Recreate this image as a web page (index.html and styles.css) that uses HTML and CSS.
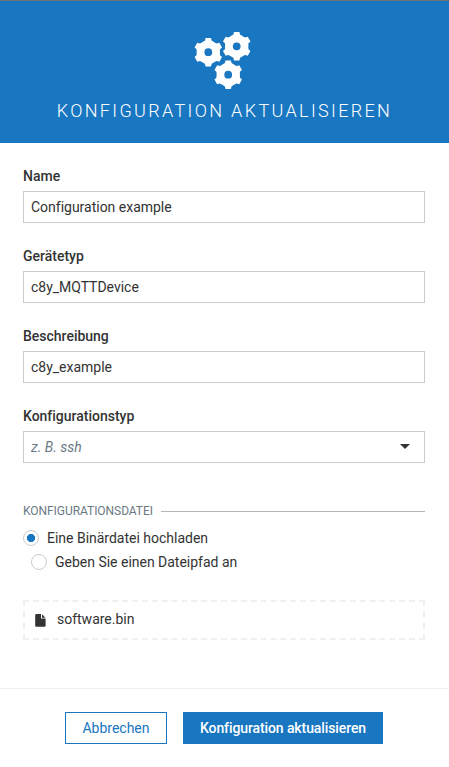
FILE: index.html
```html
<!DOCTYPE html>
<html lang="de">
<head>
<meta charset="utf-8">
<title>Konfiguration aktualisieren</title>
<link rel="stylesheet" href="styles.css">
</head>
<body>
<form class="modal">
  <header class="modal-header">
    <svg class="gears" width="60" height="60" viewBox="0 0 60 60" aria-hidden="true">
      <defs>
        <g id="gear">
          <circle r="7.8" fill="none" stroke="#fff" stroke-width="7.8"/>
          <g id="teeth" fill="#fff">
            <path id="tooth" d="M-2.7-14.3h5.4l.6 2.6 2.2 2.2h-11l2.2-2.2z"/>
            <use href="#tooth" transform="rotate(60)"/>
            <use href="#tooth" transform="rotate(120)"/>
            <use href="#tooth" transform="rotate(180)"/>
            <use href="#tooth" transform="rotate(240)"/>
            <use href="#tooth" transform="rotate(300)"/>
          </g>
        </g>
      </defs>
      <use href="#gear" x="14.3" y="22.2"/>
      <use href="#gear" x="42.7" y="16.3"/>
      <use href="#gear" x="34.2" y="44.7"/>
    </svg>
    <h1 class="title">Konfiguration aktualisieren</h1>
  </header>
  <main class="modal-body">
    <div class="field"><label class="label" for="name">Name</label><input class="control" id="name" value="Configuration example"></div>
    <div class="field"><label class="label" for="type">Gerätetyp</label><input class="control" id="type" value="c8y_MQTTDevice"></div>
    <div class="field"><label class="label" for="desc">Beschreibung</label><input class="control" id="desc" value="c8y_example"></div>
    <div class="field">
      <label class="label" for="conf">Konfigurationstyp</label>
      <div class="control select"><input class="select-input" id="conf" placeholder="z. B. ssh"><span class="caret"></span></div>
    </div>
    <div class="legend"><span class="legend-text">Konfigurationsdatei</span></div>
    <label class="option"><input class="radio" type="radio" name="file" checked><span class="option-text">Eine Binärdatei hochladen</span></label>
    <label class="option option-indented"><input class="radio" type="radio" name="file"><span class="option-text">Geben Sie einen Dateipfad an</span></label>
    <div class="dropzone">
      <svg class="file-icon" width="11" height="13" viewBox="0 0 11 13" aria-hidden="true"><path fill="#333" d="M1.3 0H6v4.6h4.6v7.1q0 1.1-1.1 1.1H1.3Q.2 12.8.2 11.7V1.1Q.2 0 1.3 0zM7 .3 10.4 3.7H7z"/></svg>
      <span class="file-name">software.bin</span>
    </div>
  </main>
  <footer class="modal-footer">
    <button class="btn btn-default" type="button">Abbrechen</button>
    <button class="btn btn-primary" type="button">Konfiguration aktualisieren</button>
  </footer>
</form>
</body>
</html>
```
FILE: styles.css
```css
* { box-sizing: border-box; }

body {
  margin: 0;
  background: #fff;
  color: #333;
  font: 14px/20px Roboto, sans-serif;
  letter-spacing: -0.01px;
}

.modal {
  display: flex;
  flex-direction: column;
  height: 767px;
  overflow: hidden;
}

.modal-header {
  display: flex;
  flex-direction: column;
  align-items: center;
  height: 143px;
  padding-top: 29px;
  border-top: 1px solid #707070;
  background: #1976c1;
  color: #fff;
}

.gears { margin-right: 1px; }

.title {
  margin: 9px 0 0;
  font-size: 18px;
  font-weight: 300;
  line-height: 24px;
  letter-spacing: 2.34px;
  text-transform: uppercase;
  white-space: nowrap;
}

.modal-body {
  height: 545px;
  padding: 23px 24px 0 23px;
}

.field { margin-bottom: 23px; }

.label {
  display: block;
  margin-bottom: 5px;
  font-weight: 500;
}

.control {
  display: block;
  width: 100%;
  height: 32px;
  padding: 0 7px;
  border: 1px solid #c8cdd1;
  border-radius: 0;
  background: #fff;
  color: #333;
  font: inherit;
  letter-spacing: inherit;
}

.select {
  display: flex;
  align-items: center;
  justify-content: space-between;
  padding-right: 14px;
}

.select-input {
  width: 250px;
  padding: 0;
  border: 0;
  font: inherit;
  letter-spacing: inherit;
}

.select-input::placeholder {
  color: #6c7a84;
  font-style: italic;
  opacity: 1;
}

.caret {
  margin-bottom: 1px;
  border: 5px solid transparent;
  border-top-color: #333;
  border-bottom: 0;
}

.legend {
  display: flex;
  align-items: center;
  gap: 8px;
  height: 20px;
  margin-top: 38px;
  color: #6b7983;
  font-size: 12px;
  letter-spacing: -0.05px;
  text-transform: uppercase;
}

.legend::after {
  flex: 1;
  height: 1px;
  background: #b0b7bd;
  content: "";
}

.option {
  display: flex;
  align-items: center;
  gap: 8px;
  height: 24px;
  margin-top: 5px;
}

.option-indented {
  margin-top: 0;
  padding-left: 8px;
}

.option-text { padding-bottom: 1px; }

.radio {
  width: 16px;
  height: 16px;
  margin: 0;
  border: 1px solid #c8cdd1;
  border-radius: 50%;
  appearance: none;
}

.radio:checked {
  background: radial-gradient(circle, #1976c1 3.8px, transparent 4.4px);
}

.dropzone {
  display: flex;
  align-items: center;
  gap: 11px;
  height: 40px;
  margin-top: 26px;
  padding: 0 10px;
  border: 2px dashed #f0f0f0;
}

.file-icon { margin-top: 1px; }

.file-name { padding-bottom: 2px; }

.modal-footer {
  display: flex;
  justify-content: center;
  gap: 16px;
  height: 79px;
  padding: 23px 1px 0 0;
  border-top: 1px solid #f0f0f0;
}

.btn {
  height: 32px;
  padding: 0 0 1px;
  border: 1px solid #1976c1;
  font: inherit;
  letter-spacing: inherit;
}

.btn-default {
  width: 102px;
  background: #fff;
  color: #1976c1;
}

.btn-primary {
  width: 200px;
  background: #1976c1;
  color: #fff;
  font-weight: 500;
  letter-spacing: -0.1px;
}
```
